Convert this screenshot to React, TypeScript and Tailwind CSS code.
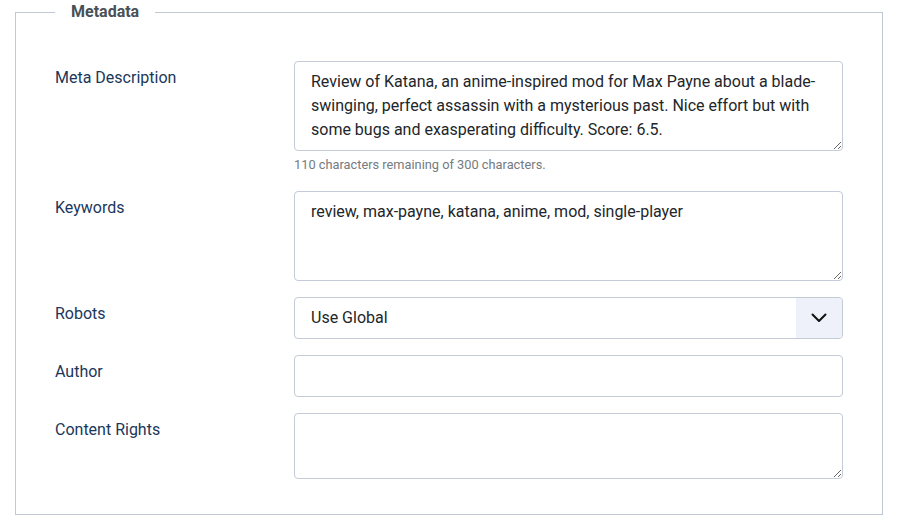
import { useState } from 'react';

const fieldBase =
  'block w-full rounded border border-[#c3cbd6] bg-white px-4 py-2 text-[16px] leading-6 text-[#22262a] outline-none';

const labelCls = 'w-[239px] shrink-0 pt-[5px] text-[16px] leading-6 text-[#1a375b]';

export default function App() {
  const [description, setDescription] = useState(
    'Review of Katana, an anime-inspired mod for Max Payne about a blade-swinging, perfect assassin with a mysterious past. Nice effort but with some bugs and exasperating difficulty. Score: 6.5.'
  );
  const [keywords, setKeywords] = useState('review, max-payne, katana, anime, mod, single-player');
  const [robots, setRobots] = useState('');
  const [author, setAuthor] = useState('');
  const [rights, setRights] = useState('');

  return (
    <div className="bg-white pl-[15px] pr-[16px] font-['Roboto',_'Liberation_Sans',_sans-serif]">
      <fieldset className="border border-[#c0c9d3] px-[39px] pt-[37px] pb-[35px]">
        <legend className="px-4 text-[16px] leading-6 font-bold text-[#495057]">Metadata</legend>

        <div className="flex flex-col gap-4">
          {/* META DESCRIPTION */}
          <div className="flex">
            <label className={labelCls}>Meta Description</label>
            <div className="flex-1">
              <textarea
                className={`${fieldBase} h-[90px]`}
                value={description}
                onChange={(e) => setDescription(e.target.value)}
              />
              <p className="mt-1 text-[12.8px] leading-5 text-[#757b80]">
                {300 - description.length} characters remaining of 300 characters.
              </p>
            </div>
          </div>

          {/* KEYWORDS */}
          <div className="flex">
            <label className={labelCls}>Keywords</label>
            <textarea
              className={`${fieldBase} h-[90px] flex-1`}
              value={keywords}
              onChange={(e) => setKeywords(e.target.value)}
            />
          </div>

          {/* ROBOTS */}
          <div className="flex">
            <label className={labelCls}>Robots</label>
            <div className="relative flex-1">
              <select
                className={`${fieldBase} h-[42px] appearance-none`}
                value={robots}
                onChange={(e) => setRobots(e.target.value)}
              >
                <option value="">Use Global</option>
                <option value="index, follow">index, follow</option>
                <option value="noindex, follow">noindex, follow</option>
                <option value="index, nofollow">index, nofollow</option>
                <option value="noindex, nofollow">noindex, nofollow</option>
              </select>
              <span className="pointer-events-none absolute top-px right-px bottom-px flex w-[46px] items-center justify-center rounded-r bg-[#eef1f9]">
                <svg width="16" height="10" viewBox="0 0 16 10" fill="none">
                  <path d="M1.5 1.5 L8 8 L14.5 1.5" stroke="#111" strokeWidth="2" strokeLinecap="round" strokeLinejoin="round" />
                </svg>
              </span>
            </div>
          </div>

          {/* AUTHOR */}
          <div className="flex">
            <label className={labelCls}>Author</label>
            <input
              type="text"
              className={`${fieldBase} h-[42px] flex-1`}
              value={author}
              onChange={(e) => setAuthor(e.target.value)}
            />
          </div>

          {/* CONTENT RIGHTS */}
          <div className="flex">
            <label className={labelCls}>Content Rights</label>
            <textarea
              className={`${fieldBase} h-[66px] flex-1`}
              value={rights}
              onChange={(e) => setRights(e.target.value)}
            />
          </div>
        </div>
      </fieldset>
    </div>
  );
}
